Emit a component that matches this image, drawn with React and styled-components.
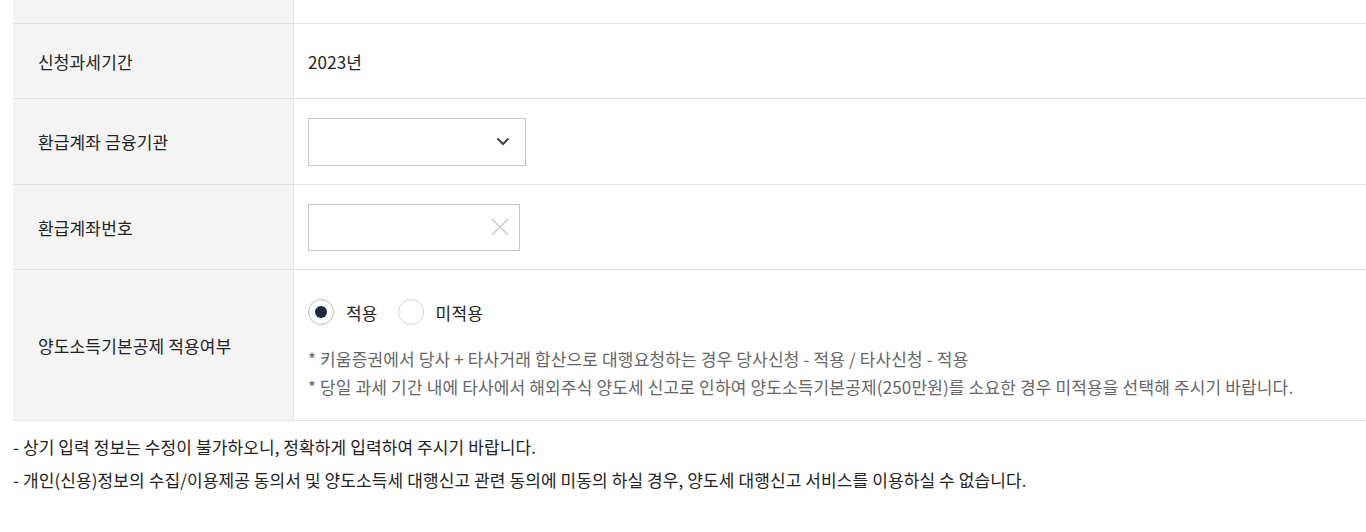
import React from 'react';
import styled, { createGlobalStyle } from 'styled-components';

const GlobalStyle = createGlobalStyle`
  html, body {
    margin: 0;
    padding: 0;
    background: #fff;
  }
  body {
    font-family: 'Noto Sans CJK KR', 'Noto Sans', sans-serif;
    color: #222;
  }
`;

const Page = styled.div`
  padding: 0 0 0 13px;
  width: 1353px;
`;

const Table = styled.div`
  display: grid;
  grid-template-columns: 281px 1fr;
  border-bottom: 1px solid #e3e3e3;
`;

const Head = styled.div`
  background: #f4f4f4;
  border-right: 1px solid #e6e6e6;
  border-top: ${p => (p.first ? 'none' : '1px solid #e3e3e3')};
  height: ${p => p.h}px;
  display: flex;
  align-items: center;
  padding-left: 25px;
  font-size: 17px;
  letter-spacing: 0.15px;
  color: #222;
`;

const Cell = styled.div`
  border-top: ${p => (p.first ? 'none' : '1px solid #e3e3e3')};
  height: ${p => p.h}px;
  display: flex;
  flex-direction: column;
  justify-content: center;
  padding-left: 14px;
  font-size: 17px;
  letter-spacing: 0.15px;
  color: #222;
`;

const SelectBox = styled.div`
  width: 218px;
  height: 48px;
  box-sizing: border-box;
  border: 1px solid #c6c6c6;
  display: flex;
  align-items: center;
  justify-content: flex-end;
  padding-right: 15px;
`;

const InputBox = styled.div`
  width: 212px;
  height: 47px;
  box-sizing: border-box;
  border: 1px solid #c6c6c6;
  display: flex;
  align-items: center;
  justify-content: flex-end;
  padding-right: 10px;
`;

const RadioRow = styled.div`
  display: flex;
  align-items: center;
  margin-top: 10px;
`;

const RadioItem = styled.label`
  display: flex;
  align-items: center;
  gap: 12px;
  font-size: 17px;
  color: #222;
  margin-right: 20px;
`;

const Circle = styled.span`
  width: 26px;
  height: 26px;
  border-radius: 50%;
  box-sizing: border-box;
  border: 1px solid ${p => (p.on ? '#bdbdbd' : '#d4d4d4')};
  display: flex;
  align-items: center;
  justify-content: center;
  &::after {
    content: '';
    width: 12px;
    height: 12px;
    border-radius: 50%;
    background: #1f2940;
    display: ${p => (p.on ? 'block' : 'none')};
  }
`;

const Notes = styled.div`
  margin-top: 20px;
  font-size: 17px;
  letter-spacing: 0.15px;
  line-height: 28px;
  color: #666;
`;

const Footer = styled.ul`
  list-style: none;
  margin: 9px 0 0;
  padding: 0;
  font-size: 17px;
  letter-spacing: 0.1px;
  color: #222;
  li {
    line-height: 33px;
  }
`;

export default function App() {
  return (
    <Page>
      <GlobalStyle />
      <Table>
        <Head first h={23} />
        <Cell first h={23} />

        <Head h={74}>신청과세기간</Head>
        <Cell h={74}>2023년</Cell>

        <Head h={85}>환급계좌 금융기관</Head>
        <Cell h={85}>
          <SelectBox>
            <svg width="14" height="9" viewBox="0 0 14 9" fill="none">
              <path d="M1.5 1.5 L7 7 L12.5 1.5" stroke="#444" strokeWidth="2" />
            </svg>
          </SelectBox>
        </Cell>

        <Head h={84}>환급계좌번호</Head>
        <Cell h={84}>
          <InputBox>
            <svg width="18" height="18" viewBox="0 0 18 18" fill="none">
              <path d="M1 1 L17 17 M17 1 L1 17" stroke="#c8c8c8" strokeWidth="1.4" />
            </svg>
          </InputBox>
        </Cell>

        <Head h={150}>양도소득기본공제 적용여부</Head>
        <Cell h={150}>
          <RadioRow>
            <RadioItem>
              <Circle on />
              적용
            </RadioItem>
            <RadioItem>
              <Circle />
              미적용
            </RadioItem>
          </RadioRow>
          <Notes>
            <div>* 키움증권에서 당사 + 타사거래 합산으로 대행요청하는 경우 당사신청 - 적용 / 타사신청 - 적용</div>
            <div>* 당일 과세 기간 내에 타사에서 해외주식 양도세 신고로 인하여 양도소득기본공제(250만원)를 소요한 경우 미적용을 선택해 주시기 바랍니다.</div>
          </Notes>
        </Cell>
      </Table>
      <Footer>
        <li>- 상기 입력 정보는 수정이 불가하오니, 정확하게 입력하여 주시기 바랍니다.</li>
        <li>- 개인(신용)정보의 수집/이용제공 동의서 및 양도소득세 대행신고 관련 동의에 미동의 하실 경우, 양도세 대행신고 서비스를 이용하실 수 없습니다.</li>
      </Footer>
    </Page>
  );
}
